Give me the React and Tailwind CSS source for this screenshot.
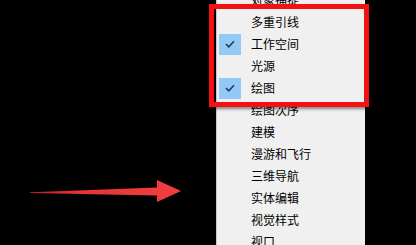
import React from 'react';

const items = [
  { label: '对象捕捉' },
  { label: '多重引线' },
  { label: '工作空间', checked: true },
  { label: '光源' },
  { label: '绘图', checked: true },
  { label: '绘图次序' },
  { label: '建模' },
  { label: '漫游和飞行' },
  { label: '三维导航' },
  { label: '实体编辑' },
  { label: '视觉样式' },
  { label: '视口' },
];

const Check = () => (
  <svg width="10" height="8" viewBox="0 0 10 8">
    <path d="M1 4.2 L3.8 6.8 L9 1.2" fill="none" stroke="#253a57" strokeWidth="1.6" />
  </svg>
);

export default function App() {
  return (
    <div className="relative w-[416px] h-[245px] bg-black overflow-hidden" style={{ fontFamily: '"Noto Sans CJK SC", "Microsoft YaHei", sans-serif' }}>
      <div className="ml-[216px] w-[149px] h-[270px] -mt-[11px] bg-[#f0f0f0] border-l border-[#c8c8c8] flex flex-col pl-[2px] pt-0">
        {items.map(item => (
          <div key={item.label} className="h-[22px] flex items-center shrink-0">
            <div className={`w-[22px] h-[21px] flex items-center justify-center ${item.checked ? 'bg-[#92c9f7]' : ''}`}>
              {item.checked && <Check />}
            </div>
            <span className="ml-[10px] text-[12px] leading-none text-black">{item.label}</span>
          </div>
        ))}
      </div>

      <div className="absolute left-[209px] top-[4px] w-[160px] h-[103px] border-[5px] border-[#f41111] shadow-[1px_2px_3px_rgba(0,0,0,0.45)]" />

      <svg className="absolute left-0 top-0 pointer-events-none" width="416" height="245" viewBox="0 0 416 245">
        <defs>
          <linearGradient id="shaft" x1="30" y1="0" x2="160" y2="0" gradientUnits="userSpaceOnUse">
            <stop offset="0" stopColor="#b82020" />
            <stop offset="0.4" stopColor="#e83436" />
            <stop offset="1" stopColor="#f03c3c" />
          </linearGradient>
        </defs>
        <polygon
          points="30,192.2 157,187.5 157,180 181,191 157,202 157,195.6 30,193"
          fill="url(#shaft)"
        />
      </svg>
    </div>
  );
}
